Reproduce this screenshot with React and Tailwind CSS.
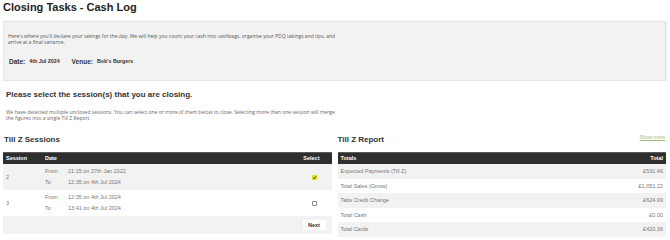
const sessions = [
  { id: "2", from: "21:15 on 27th Jan 2022", to: "12:35 on 4th Jul 2024", checked: true },
  { id: "3", from: "12:35 on 4th Jul 2024", to: "13:41 on 4th Jul 2024", checked: false },
];

const totals = [
  ["Expected Payments (Till Z)", "£531.46"],
  ["Total Sales (Gross)", "£1,051.22"],
  ["Tabs Credit Change", "£624.99"],
  ["Total Cash", "£0.00"],
  ["Total Cards", "£420.36"],
];

const Checkbox = ({ checked }) =>
  checked ? (
    <svg width="5" height="5" viewBox="0 0 10 10">
      <rect x="0" y="0" width="10" height="10" rx="1" fill="#e2e21a" />
      <path d="M2 5.5 L4.2 7.6 L8.2 2.4" fill="none" stroke="#333" strokeWidth="1.8" />
    </svg>
  ) : (
    <div className="w-[5px] h-[5px] bg-white border border-[#8a8a8a] rounded-[1px]" />
  );

const App = () => {
  return (
    <main className="w-[670px] h-[240px] bg-white pl-[3px] pr-[4px] font-['Liberation_Sans',Arial,sans-serif] overflow-hidden">
      <h1 className="h-[21px] text-[11px] leading-[14px] font-bold text-[#222]">
        Closing Tasks - Cash Log
      </h1>

      <section className="h-[60px] bg-[#f2f2f2] border border-[#e4e4e4] shadow-[1px_0_1px_rgba(0,0,0,0.08)] px-[4px] pt-[11px]">
        <p className="font-['Open_Sans',sans-serif] text-[5px] leading-[6px] text-[#555] w-[331px]">
          Here's where you'll declare your takings for the day. We will help you count your cash into cashbags, organise your PDQ takings and tips, and arrive at a final variance.
        </p>
        <div className="mt-[13px] flex items-center h-[8px] font-bold text-[#333]">
          <span className="text-[6.5px] ml-[1px]">Date:</span>
          <span className="text-[5.3px] ml-[4px]">4th Jul 2024</span>
          <span className="text-[6.5px] ml-[12px]">Venue:</span>
          <span className="text-[5.3px] ml-[4px]">Bob's Burgers</span>
        </div>
      </section>

      <h2 className="mt-[9px] pl-[3px] text-[8px] leading-[10px] font-bold text-[#333]">
        Please select the session(s) that you are closing.
      </h2>
      <p className="mt-[9px] pl-[3px] w-[336px] font-['Open_Sans',sans-serif] text-[5px] leading-[6px] text-[#666]">
        We have detected multiple unclosed sessions. You can select one or more of them below to close. Selecting more than one session will merge the figures into a single Till Z Report.
      </p>

      <div className="mt-[14px] grid grid-cols-2 gap-[6px]">
        {/* left: sessions */}
        <div>
          <h3 className="pl-[1px] text-[8px] leading-[10px] font-bold text-[#333]">Till Z Sessions</h3>
          <div className="mt-[7px]">
            <div className="h-[12px] bg-[#2e2e2e] border-t border-[#5a5a5a] flex items-center text-white font-bold text-[5.5px]">
              <span className="w-[42px] pl-[3px]">Session</span>
              <span className="flex-1">Date</span>
              <span className="pr-[12px]">Select</span>
            </div>
            {sessions.map((s, i) => (
              <div
                key={s.id}
                className={`h-[26px] flex items-center text-[5.5px] text-[#777] ${i % 2 === 0 ? "bg-[#f2f2f2]" : "bg-white"}`}
              >
                <span className="w-[42px] pl-[3px]">{s.id}</span>
                <div className="flex-1 leading-[11px]">
                  <div className="flex">
                    <span className="w-[23px]">From</span>
                    <span>{s.from}</span>
                  </div>
                  <div className="flex">
                    <span className="w-[23px]">To</span>
                    <span>{s.to}</span>
                  </div>
                </div>
                <div className="pr-[15px]">
                  <Checkbox checked={s.checked} />
                </div>
              </div>
            ))}
            <div className="h-[18px] bg-[#f2f2f2] flex items-center justify-end pr-[6px]">
              <button className="h-[10px] w-[23px] bg-white text-[5.5px] font-bold text-[#333]">Next</button>
            </div>
          </div>
        </div>

        {/* right: report */}
        <div>
          <div className="flex items-start justify-between">
            <h3 className="text-[8px] leading-[10px] font-bold text-[#333]">Till Z Report</h3>
            <a className="text-[5px] leading-[6px] text-[#a6b97c] underline mr-[1px] -mt-[1px]">Show more</a>
          </div>
          <div className="mt-[7px]">
            <div className="h-[12px] bg-[#2e2e2e] border-t border-[#5a5a5a] flex items-center justify-between px-[3px] text-white font-bold text-[5.5px]">
              <span>Totals</span>
              <span>Total</span>
            </div>
            {totals.map(([label, value], i) => (
              <div
                key={label}
                className={`h-[14.5px] flex items-center justify-between px-[3px] text-[5.5px] text-[#777] ${i % 2 === 0 ? "bg-[#f2f2f2]" : "bg-white"}`}
              >
                <span>{label}</span>
                <span>{value}</span>
              </div>
            ))}
          </div>
        </div>
      </div>
    </main>
  );
};

export default App;
